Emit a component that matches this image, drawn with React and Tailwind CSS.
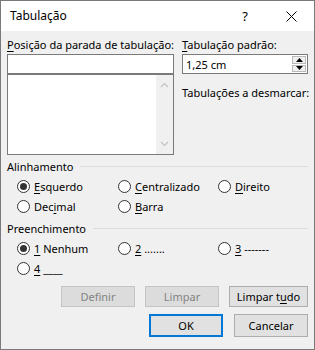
import React from "react";

const F = { fontFamily: '"Noto Sans", "Segoe UI", sans-serif' };

function U({ children }) {
  return <span className="underline underline-offset-[2px] decoration-[1px]">{children}</span>;
}

function Radio({ checked, children, className = "" }) {
  return (
    <div className={"flex items-center h-[20px] whitespace-nowrap " + className}>
      <div className="w-[13px] h-[13px] rounded-full border border-[#333] bg-white flex items-center justify-center mr-[4px] shrink-0">
        {checked && <div className="w-[7px] h-[7px] rounded-full bg-[#333]" />}
      </div>
      <span className="text-[11px] text-black leading-none">{children}</span>
    </div>
  );
}

function Group({ title, className = "" }) {
  return (
    <div className={"flex items-center h-[16px] " + className}>
      <span className="text-[11px] text-black leading-none mr-[7px]">{title}</span>
      <div className="flex-1 h-px bg-[#dcdcdc]" />
    </div>
  );
}

function Btn({ children, disabled, primary, className = "" }) {
  return (
    <div
      className={
        "flex items-center justify-center text-[11px] leading-none whitespace-nowrap " +
        (primary
          ? "border-2 border-[#0078d7] bg-[#e1e1e1] text-black "
          : disabled
          ? "border border-[#c4c4c4] bg-[#dcdcdc] text-[#838383] "
          : "border border-[#adadad] bg-[#e1e1e1] text-black ") +
        className
      }
    >
      {children}
    </div>
  );
}

export default function App() {
  return (
    <div style={F} className="w-[315px] h-[350px] border border-[#7a7a7a] bg-[#f0f0f0] flex flex-col text-black">
      <div className="h-[30px] bg-white flex items-center shrink-0">
        <span className="ml-[9px] text-[12px] leading-none flex-1">Tabulação</span>
        <span className="text-[13px] leading-none mr-[38px]">?</span>
        <svg width="11" height="11" viewBox="0 0 11 11" className="mr-[17px]">
          <path d="M0.5 0.5 L10.5 10.5 M10.5 0.5 L0.5 10.5" stroke="#000" strokeWidth="1" />
        </svg>
      </div>
      <div className="px-[6px] pt-[8px] flex flex-col">
        <div className="flex gap-[8px]">
          <div className="w-[168px] flex flex-col">
            <div className="text-[11px] leading-none h-[15px] whitespace-nowrap"><U>P</U>osição da parada de tabulação:</div>
            <div className="h-[20px] border border-[#7a7a7a] bg-white" />
            <div className="h-[81px] border border-[#7a7a7a] bg-white flex justify-end">
              <div className="w-[17px] bg-[#f0f0f0] flex flex-col items-center justify-between py-[7px]">
                <svg width="9" height="6" viewBox="0 0 9 6"><path d="M1 5 L4.5 1.5 L8 5" stroke="#c2c2c2" fill="none" strokeWidth="1.2" /></svg>
                <svg width="9" height="6" viewBox="0 0 9 6"><path d="M1 1 L4.5 4.5 L8 1" stroke="#c2c2c2" fill="none" strokeWidth="1.2" /></svg>
              </div>
            </div>
          </div>
          <div className="flex-1 flex flex-col">
            <div className="text-[11px] leading-none h-[15px] whitespace-nowrap"><U>T</U>abulação padrão:</div>
            <div className="h-[20px] border border-[#7a7a7a] bg-white flex items-center mr-[1px]">
              <span className="text-[11px] leading-none ml-[3px] flex-1">1,25 cm</span>
              <div className="w-[16px] h-full flex flex-col p-[1px] gap-[1px]">
                <div className="flex-1 bg-[#f0f0f0] border border-[#b9b9b9] flex items-center justify-center">
                  <svg width="7" height="4" viewBox="0 0 7 4"><path d="M0 4 L3.5 0 L7 4Z" fill="#000" /></svg>
                </div>
                <div className="flex-1 bg-[#f0f0f0] border border-[#b9b9b9] flex items-center justify-center">
                  <svg width="7" height="4" viewBox="0 0 7 4"><path d="M0 0 L3.5 4 L7 0Z" fill="#000" /></svg>
                </div>
              </div>
            </div>
            <div className="text-[11px] leading-none mt-[13px] whitespace-nowrap">Tabulações a desmarcar:</div>
          </div>
        </div>
        <Group title="Alinhamento" className="mt-[3px]" />
        <div className="pl-[10px] mt-[2px] grid grid-cols-[101px_100px_1fr]">
          <Radio checked><U>E</U>squerdo</Radio>
          <Radio><U>C</U>entralizado</Radio>
          <Radio><U>D</U>ireito</Radio>
          <Radio>Dec<U>i</U>mal</Radio>
          <Radio><U>B</U>arra</Radio>
        </div>
        <Group title="Preenchimento" className="mt-[4px]" />
        <div className="pl-[10px] mt-[2px] grid grid-cols-[101px_100px_1fr]">
          <Radio checked><U>1</U> Nenhum</Radio>
          <Radio><U>2</U> .......</Radio>
          <Radio><U>3</U> -------</Radio>
          <Radio><U>4</U> ____</Radio>
        </div>
        <div className="flex justify-end gap-[10px] mt-[8px]">
          <Btn disabled className="w-[74px] h-[21px]">Definir</Btn>
          <Btn disabled className="w-[74px] h-[21px]">Limpar</Btn>
          <Btn className="w-[79px] h-[21px]">Limpar t<U>u</U>do</Btn>
        </div>
        <div className="flex justify-end gap-[11px] mt-[7px]">
          <Btn primary className="w-[74px] h-[23px]">OK</Btn>
          <Btn className="w-[74px] h-[23px]">Cancelar</Btn>
        </div>
      </div>
    </div>
  );
}
